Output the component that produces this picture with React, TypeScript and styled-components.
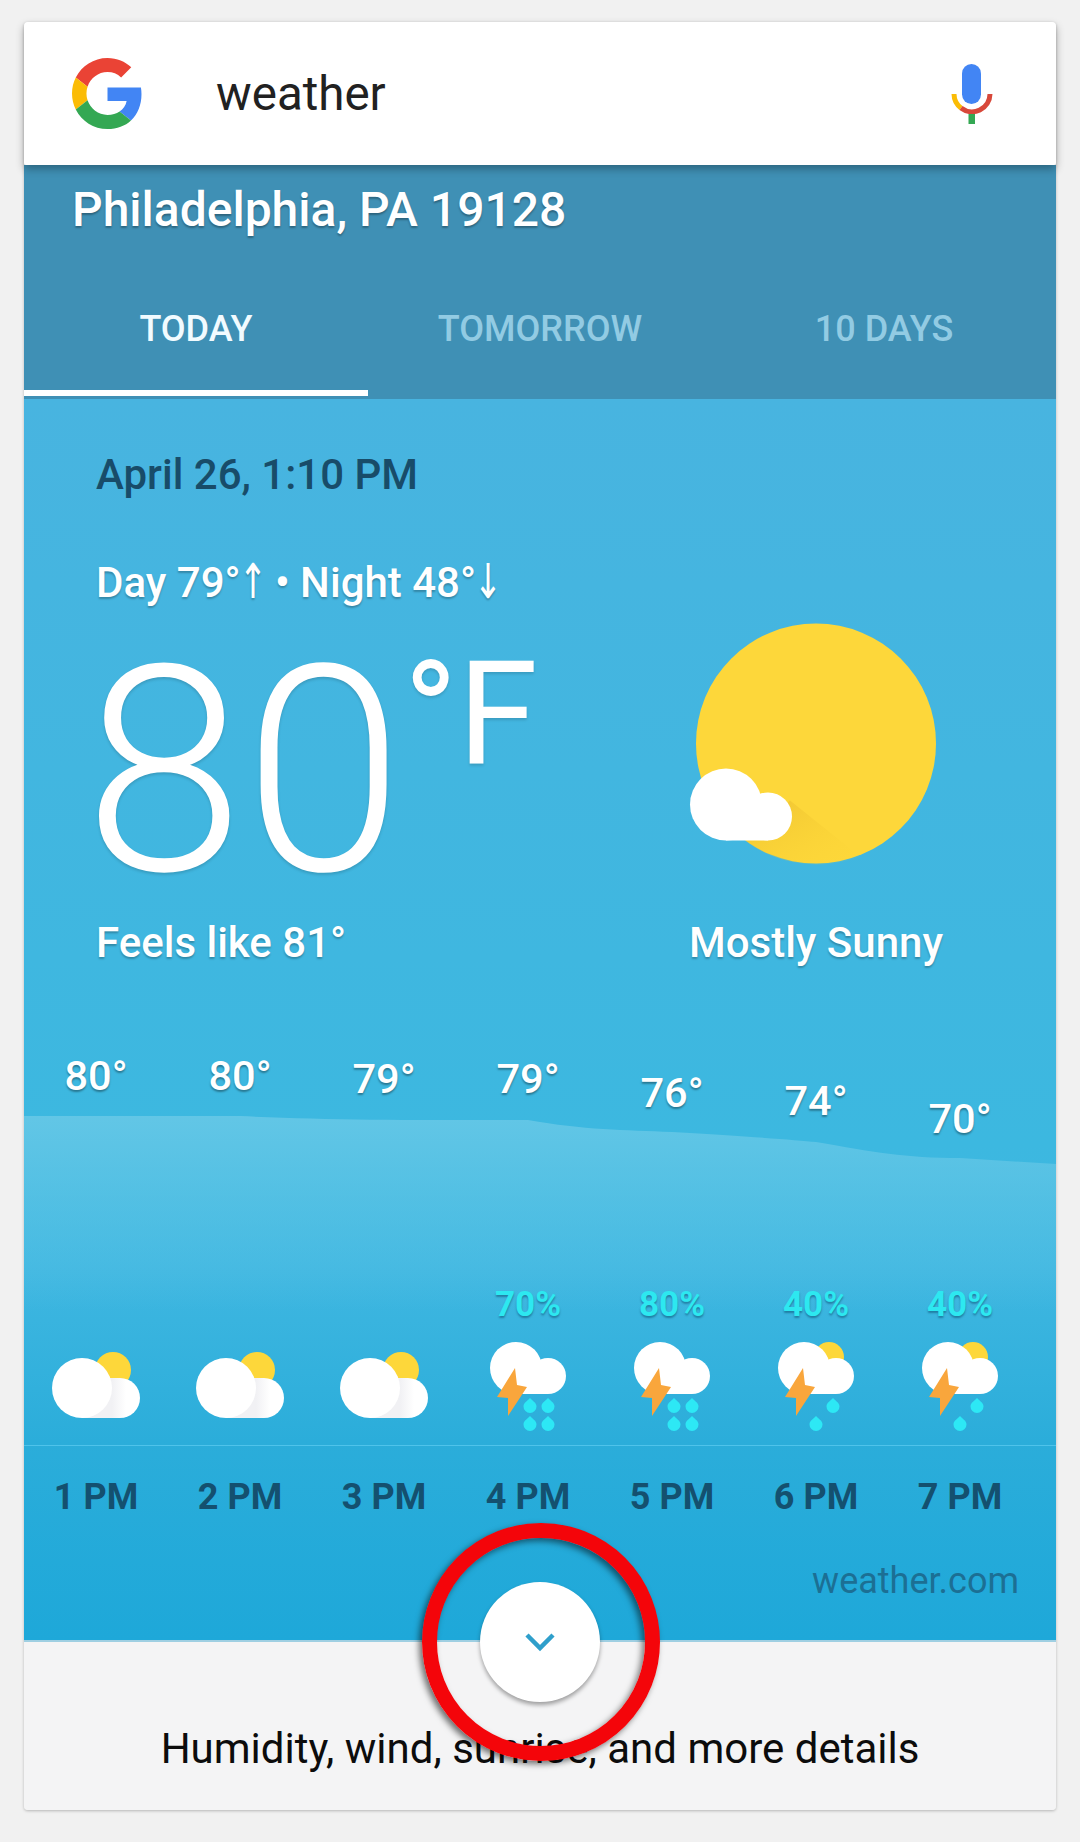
import React from "react";
import styled, { createGlobalStyle } from "styled-components";

const hours = [
  { temp: 80, drop: 0, label: "1 PM", icon: "partly" },
  { temp: 80, drop: 0, label: "2 PM", icon: "partly" },
  { temp: 79, drop: 3, label: "3 PM", icon: "partly" },
  { temp: 79, drop: 3, label: "4 PM", icon: "heavy", chance: 70 },
  { temp: 76, drop: 17, label: "5 PM", icon: "heavy", chance: 80 },
  { temp: 74, drop: 25, label: "6 PM", icon: "light", chance: 40 },
  { temp: 70, drop: 43, label: "7 PM", icon: "light", chance: 40 },
];

const GoogleLogo = () => (
  <LogoSvg viewBox="0 0 48 48">
    <path fill="#EA4335" d="M24 9.5c3.54 0 6.71 1.22 9.21 3.6l6.85-6.85C35.9 2.38 30.47 0 24 0 14.62 0 6.51 5.38 2.56 13.22l7.98 6.19C12.43 13.72 17.74 9.5 24 9.5z" />
    <path fill="#4285F4" d="M46.98 24.55c0-1.57-.15-3.09-.38-4.55H24v9.02h12.94c-.58 2.96-2.26 5.48-4.78 7.18l7.73 6c4.51-4.18 7.09-10.36 7.09-17.65z" />
    <path fill="#FBBC05" d="M10.53 28.59c-.48-1.45-.76-2.99-.76-4.59s.27-3.14.76-4.59l-7.98-6.19C.92 16.46 0 20.12 0 24c0 3.88.92 7.54 2.56 10.78l7.97-6.19z" />
    <path fill="#34A853" d="M24 48c6.48 0 11.93-2.13 15.89-5.81l-7.73-6c-2.15 1.45-4.92 2.3-8.16 2.3-6.26 0-11.57-4.22-13.47-9.91l-7.98 6.19C6.51 42.62 14.62 48 24 48z" />
  </LogoSvg>
);

const MicIcon = () => (
  <MicSvg viewBox="0 0 42 60">
    <rect x="11" y="0" width="19" height="40" rx="9.5" fill="#4285f4" />
    <path d="M3 30A18 18 0 0 0 10 44" fill="none" stroke="#fbbc05" strokeWidth="5" />
    <path d="M10 44A18 18 0 0 0 39 30" fill="none" stroke="#d8483a" strokeWidth="5" />
    <rect x="17.5" y="50" width="6.5" height="10" fill="#34a853" />
  </MicSvg>
);

const SunIcon = () => (
  <svg width="288" height="296" viewBox="672 622 288 296">
    <defs>
      <linearGradient id="sunShade" x1="0" y1="0" x2="1" y2="1">
        <stop offset="0" stopColor="#e8b92e" stopOpacity="0.7" />
        <stop offset="1" stopColor="#fdd835" stopOpacity="0" />
      </linearGradient>
    </defs>
    <circle cx="816" cy="743" r="120" fill="#fdd73a" />
    <path d="M745 840l45-40 70 56a120 120 0 0 1-115-16z" fill="url(#sunShade)" />
    <circle cx="726" cy="804" r="36" fill="#fff" />
    <circle cx="768" cy="816" r="24" fill="#fff" />
    <rect x="726" y="800" width="42" height="40" fill="#fff" />
  </svg>
);

const CloudSun = () => (
  <svg width="120" height="120" viewBox="0 0 120 120">
    <defs>
      <linearGradient id="cloudShade" gradientUnits="userSpaceOnUse" x1="76" y1="0" x2="90" y2="0">
        <stop offset="0" stopColor="#f1f1f4" />
        <stop offset="1" stopColor="#ffffff" />
      </linearGradient>
    </defs>
    <circle cx="77" cy="45" r="18" fill="#fdd73a" />
    <circle cx="84" cy="73" r="20" fill="url(#cloudShade)" />
    <rect x="46" y="53" width="38" height="40" fill="url(#cloudShade)" />
    <circle cx="46" cy="63" r="30" fill="#fff" />
  </svg>
);

const Drop = ({ x, y }: { x: number; y: number }) => (
  <path d={`M${x} ${y - 7}c2.5 3 6.5 4.5 6.5 8.5a6.5 6.5 0 0 1-13 0c0-4 4-5.5 6.5-8.5z`} fill="#2de8f5" />
);

const Storm = ({ heavy }: { heavy: boolean }) => (
  <svg width="120" height="120" viewBox="0 0 120 120">
    {!heavy && <circle cx="73" cy="32" r="15" fill="#fdd73a" />}
    <circle cx="80" cy="51" r="18" fill="#fff" />
    <rect x="48" y="40" width="32" height="29" fill="#fff" />
    <circle cx="48" cy="43" r="26" fill="#fff" />
    <path d="M47 43L29 72l11 1v18l19-29-10-2z" fill="#f9a63c" />
    {heavy ? (
      <>
        <Drop x={62} y={80} />
        <Drop x={80} y={80} />
        <Drop x={62} y={98} />
        <Drop x={80} y={98} />
      </>
    ) : (
      <>
        <Drop x={77} y={80} />
        <Drop x={60} y={98} />
      </>
    )}
  </svg>
);

const App: React.FC = () => {
  return (
    <>
      <GlobalStyle />
      <Card>
        <SearchBar>
          <GoogleLogo />
          <Query>weather</Query>
          <MicIcon />
        </SearchBar>
        <Header>
          <Place>Philadelphia, PA 19128</Place>
          <Tabs>
            <Tab $active>TODAY</Tab>
            <Tab>TOMORROW</Tab>
            <Tab>10 DAYS</Tab>
          </Tabs>
        </Header>
        <Forecast>
          <DateLine>April 26, 1:10 PM</DateLine>
          <HighLow>
            Day 79°<Arrow>↑</Arrow> • Night 48°<Arrow>↓</Arrow>
          </HighLow>
          <Current>
            <Reading>
              <BigTemp>
                80<Unit>°F</Unit>
              </BigTemp>
              <Caption $indent={12}>Feels like 81°</Caption>
            </Reading>
            <Condition>
              <SunIcon />
              <Caption>Mostly Sunny</Caption>
            </Condition>
          </Current>
          <Hourly>
            <TempChart viewBox="0 0 1032 270" preserveAspectRatio="none">
              <defs>
                <linearGradient id="chartFill" x1="0" y1="0" x2="0" y2="1">
                  <stop offset="0" stopColor="#62c6e6" />
                  <stop offset="1" stopColor="#62c6e6" stopOpacity="0" />
                </linearGradient>
              </defs>
              <path
                d="M0 76L216 76C300 80 380 80 504 80C560 90 600 90 648 92C720 96 770 100 792 102C850 112 880 118 936 118L1032 124V270H0Z"
                fill="url(#chartFill)"
              />
            </TempChart>
            <HourGrid $height={245}>
              {hours.map((h) => (
                <Temp key={h.label} $drop={h.drop}>
                  {h.temp}°
                </Temp>
              ))}
            </HourGrid>
            <HourGrid $height={40}>
              {hours.map((h) => (
                <Chance key={h.label}>{h.chance ? `${h.chance}%` : ""}</Chance>
              ))}
            </HourGrid>
            <HourGrid $height={120}>
              {hours.map((h) => (
                <IconCell key={h.label}>
                  {h.icon === "partly" ? <CloudSun /> : <Storm heavy={h.icon === "heavy"} />}
                </IconCell>
              ))}
            </HourGrid>
            <Divider />
            <HourGrid $height={104}>
              {hours.map((h) => (
                <HourLabel key={h.label}>{h.label}</HourLabel>
              ))}
            </HourGrid>
          </Hourly>
          <Source>weather.com</Source>
        </Forecast>
        <Footer>
          <ExpandButton>
            <svg width="30" height="20" viewBox="0 0 30 20">
              <path d="M2 3l13 13L28 3" fill="none" stroke="#2f9fcb" strokeWidth="4.5" />
            </svg>
          </ExpandButton>
          <Details>Humidity, wind, sunrise, and more details</Details>
          <RedRing />
        </Footer>
      </Card>
    </>
  );
};

const GlobalStyle = createGlobalStyle`
  html, body {
    margin: 0;
    background: #f1f1f1;
  }
  body {
    font-family: Roboto, "Liberation Sans", sans-serif;
  }
`;

const Card = styled.div`
  width: 1032px;
  height: 1788px;
  margin: 22px 24px 32px;
  border-radius: 4px;
  box-shadow: 0 1px 3px rgba(0, 0, 0, 0.25);
  display: flex;
  flex-direction: column;
`;

const SearchBar = styled.div`
  height: 143px;
  background: #fff;
  border-radius: 4px 4px 2px 2px;
  display: flex;
  align-items: center;
  padding: 0 63px 0 48px;
  box-shadow: 0 4px 8px rgba(0, 0, 0, 0.3);
  position: relative;
  z-index: 2;
  box-sizing: border-box;
`;

const LogoSvg = styled.svg`
  width: 71px;
  height: 71px;
`;

const MicSvg = styled.svg`
  width: 42px;
  height: 60px;
`;

const Query = styled.div`
  flex: 1;
  margin-left: 73px;
  font-size: 47.5px;
  color: #212121;
`;

const Header = styled.div`
  height: 234px;
  background: #3f90b5;
  display: flex;
  flex-direction: column;
`;

const Place = styled.div`
  padding: 15px 0 0 48px;
  height: 60px;
  line-height: 60px;
  font-size: 48px;
  font-weight: 500;
  color: #fff;
  text-shadow: 0 2px 2px rgba(0, 0, 0, 0.3);
`;

const Tabs = styled.div`
  margin-top: 59px;
  display: grid;
  grid-template-columns: repeat(3, 344px);
`;

const Tab = styled.div<{ $active?: boolean }>`
  height: 97px;
  box-sizing: border-box;
  padding-top: 10px;
  line-height: 40px;
  text-align: center;
  font-size: 36px;
  font-weight: 500;
  color: ${(p) => (p.$active ? "#f1fbff" : "#92cbe3")};
  border-bottom: 6px solid ${(p) => (p.$active ? "#fff" : "transparent")};
`;

const Forecast = styled.div`
  height: 1241px;
  background: linear-gradient(#48b4e0, #3cb8e0 60%, #3fb7e1 70%, #2badda 84%, #1ea8d9);
  display: flex;
  flex-direction: column;
  padding-top: 52px;
  box-sizing: border-box;
  position: relative;
`;

const DateLine = styled.div`
  margin-left: 72px;
  line-height: 48px;
  font-size: 42px;
  font-weight: 500;
  color: #184c69;
`;

const HighLow = styled.div`
  margin: 60px 0 0 72px;
  line-height: 48px;
  font-size: 42px;
  font-weight: 500;
  color: #fff;
  text-shadow: 0 2px 2px rgba(0, 0, 0, 0.25);
`;

const Arrow = styled.span`
  display: inline-flex;
  justify-content: center;
  width: 24px;
  line-height: 40px;
  height: 40px;
  overflow: visible;
  font-family: "DejaVu Sans", sans-serif;
  font-weight: 400;
  font-size: 40px;
  transform: translateY(-2px) scale(0.85, 1.2);
`;

const Current = styled.div`
  margin-top: 15px;
  display: flex;
  justify-content: space-between;
  padding: 0 96px 0 60px;
  height: 345px;
`;

const Reading = styled.div`
  display: flex;
  flex-direction: column;
`;

const BigTemp = styled.div`
  display: flex;
  align-items: flex-start;
  height: 290px;
  padding-top: 7px;
  font-size: 288px;
  line-height: 286px;
  font-weight: 300;
  color: #fff;
  text-shadow: 0 2px 3px rgba(0, 0, 0, 0.15);
`;

const Unit = styled.span`
  font-size: 145px;
  line-height: 145px;
  font-weight: 400;
  margin-top: 13px;
`;

const Condition = styled.div`
  display: flex;
  flex-direction: column;
  align-items: center;
  width: 288px;
  svg {
    height: 297px;
    flex: none;
  }
`;

const Caption = styled.div<{ $indent?: number }>`
  margin-left: ${(p) => p.$indent ?? 0}px;
  line-height: 48px;
  font-size: 42px;
  font-weight: 500;
  color: #fff;
  white-space: nowrap;
  text-shadow: 0 2px 2px rgba(0, 0, 0, 0.25);
`;

const Hourly = styled.div`
  position: relative;
  margin-top: 73px;
`;

const TempChart = styled.svg`
  position: absolute;
  top: 0;
  left: 0;
  width: 1032px;
  height: 270px;
`;

const HourGrid = styled.div<{ $height: number }>`
  position: relative;
  display: grid;
  grid-template-columns: repeat(7, 144px);
  height: ${(p) => p.$height}px;
  padding-right: 24px;
  text-align: center;
`;

const Temp = styled.div<{ $drop: number }>`
  padding-top: ${(p) => 12 + p.$drop}px;
  line-height: 48px;
  font-size: 41.5px;
  font-weight: 500;
  color: #fff;
  text-shadow: 0 2px 2px rgba(0, 0, 0, 0.35);
`;

const Chance = styled.div`
  line-height: 40px;
  font-size: 35px;
  font-weight: 700;
  color: #2de8f0;
  text-shadow: 0 2px 2px rgba(0, 60, 90, 0.45);
`;

const IconCell = styled.div`
  display: flex;
  justify-content: center;
`;

const Divider = styled.div`
  position: relative;
  height: 1px;
  background: #4fc3ea;
`;

const HourLabel = styled.div`
  padding-top: 31px;
  line-height: 40px;
  font-size: 36px;
  font-weight: 700;
  color: #14506f;
`;

const Source = styled.div`
  position: relative;
  margin: 9px 37px 0 0;
  text-align: right;
  line-height: 44px;
  font-size: 36px;
  color: #1c6f94;
`;

const Footer = styled.div`
  flex: 1;
  position: relative;
  background: #f4f4f5;
  border-top: 2px solid #9fcfe2;
  box-sizing: border-box;
  border-radius: 0 0 4px 4px;
  padding-top: 83px;
`;

const ExpandButton = styled.div`
  position: absolute;
  left: 456px;
  top: -60px;
  width: 120px;
  height: 120px;
  border-radius: 50%;
  background: #fff;
  box-shadow: 0 3px 4px rgba(0, 0, 0, 0.35);
  display: flex;
  align-items: center;
  justify-content: center;
`;

const Details = styled.div`
  text-align: center;
  line-height: 48px;
  font-size: 42px;
  color: #0c0c0c;
`;

const RedRing = styled.div`
  position: absolute;
  left: 398px;
  top: -119px;
  width: 238px;
  height: 238px;
  box-sizing: border-box;
  border-radius: 50%;
  border: 15px solid #f4050a;
  box-shadow: -3px 3px 6px rgba(0, 0, 0, 0.55), inset -3px 3px 6px rgba(0, 0, 0, 0.5);
`;

export default App;
